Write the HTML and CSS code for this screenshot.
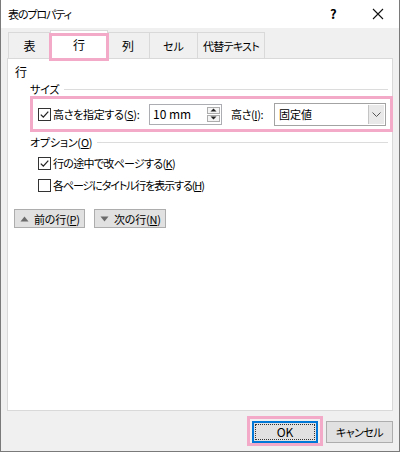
FILE: index.html
```html
<!DOCTYPE html>
<html lang="ja">
<head>
<meta charset="utf-8">
<title>表のプロパティ</title>
<link rel="stylesheet" href="styles.css">
</head>
<body>
<div class="window">
  <div class="titlebar">
    <span class="title">表のプロパティ</span>
    <span class="help">?</span>
    <span class="close"><svg width="12" height="12" viewBox="0 0 12 12"><path d="M1 1 L11 11 M11 1 L1 11" stroke="#111" stroke-width="1.1" fill="none"/></svg></span>
  </div>
  <div class="body">
    <div class="tabs">
      <div class="tab t1">表</div>
      <div class="tab t2 active">行</div>
      <div class="tab t3">列</div>
      <div class="tab t4">セル</div>
      <div class="tab t5">代替テキスト</div>
    </div>
    <div class="panel">
      <div class="section-title">行</div>
      <div class="group">
        <div class="group-head"><span class="head-text">サイズ</span><span class="rule"></span></div>
        <div class="size-row">
          <span class="checkbox checked"><svg width="11" height="11" viewBox="0 0 11 11"><path d="M1.8 5.6 L4.3 8.1 L9.3 2.6" stroke="#222" stroke-width="1.3" fill="none"/></svg></span>
          <span class="size-label">高さを指定する(<u>S</u>):</span>
          <span class="spin-input">
            <span class="value">10 mm</span>
            <span class="spinner">
              <span class="spin-btn"><svg width="7" height="4" viewBox="0 0 7 4"><path d="M0.5 3.5 L3.5 0.5 L6.5 3.5 Z" fill="#222"/></svg></span>
              <span class="spin-btn"><svg width="7" height="4" viewBox="0 0 7 4"><path d="M0.5 0.5 L3.5 3.5 L6.5 0.5 Z" fill="#222"/></svg></span>
            </span>
          </span>
          <span class="height-label">高さ(<u>I</u>):</span>
          <span class="select">
            <span class="select-value">固定値</span>
            <span class="select-btn"><svg width="9" height="5" viewBox="0 0 9 5"><path d="M0.5 0.5 L4.5 4.5 L8.5 0.5" stroke="#555" stroke-width="1" fill="none"/></svg></span>
          </span>
        </div>
      </div>
      <div class="group">
        <div class="group-head option-head"><span class="head-text">オプション(<u>O</u>)</span><span class="rule"></span></div>
        <div class="check-row">
          <span class="checkbox checked"><svg width="11" height="11" viewBox="0 0 11 11"><path d="M1.8 5.6 L4.3 8.1 L9.3 2.6" stroke="#222" stroke-width="1.3" fill="none"/></svg></span>
          <span class="check-text">行の途中で改ページする(<u>K</u>)</span>
        </div>
        <div class="check-row">
          <span class="checkbox"></span>
          <span class="check-text narrow">各ページにタイトル行を表示する(<u>H</u>)</span>
        </div>
      </div>
      <div class="nav-buttons">
        <span class="nav-btn prev"><svg width="9" height="6" viewBox="0 0 9 6"><path d="M0.5 5.5 L4.5 0.5 L8.5 5.5 Z" fill="#6b6b6b"/></svg><span class="nav-text">前の行(<u>P</u>)</span></span>
        <span class="nav-btn next"><svg width="9" height="6" viewBox="0 0 9 6"><path d="M0.5 0.5 L4.5 5.5 L8.5 0.5 Z" fill="#6b6b6b"/></svg><span class="nav-text">次の行(<u>N</u>)</span></span>
      </div>
    </div>
    <div class="footer">
      <span class="btn ok">OK</span>
      <span class="btn cancel">キャンセル</span>
    </div>
  </div>
</div>
</body>
</html>
```

FILE: styles.css
```css
* { box-sizing: border-box; }
html, body { margin: 0; padding: 0; }
body {
  width: 400px;
  height: 452px;
  background: #ffffff;
  font-family: "Noto Sans CJK JP", "Noto Sans", sans-serif;
  font-size: 11px;
  font-feature-settings: "palt";
  color: #000;
  overflow: hidden;
}
u { text-decoration: underline; text-underline-offset: 1px; }

.window {
  width: 400px;
  height: 452px;
  border-left: 1px solid #7a7a7a;
  border-right: 1px solid #7a7a7a;
  border-bottom: 1px solid #7a7a7a;
  background: #f0f0f0;
  display: flex;
  flex-direction: column;
}

.titlebar {
  height: 28px;
  background: #ffffff;
  display: flex;
  align-items: center;
  padding-left: 7px;
  flex: none;
}
.title { flex: 1; line-height: 16px; letter-spacing: -1.1px; white-space: nowrap; }
.help { width: 12px; font-size: 13px; line-height: 16px; margin-right: 30px; font-weight: 700; }
.close { width: 12px; height: 12px; margin-right: 15px; display: flex; }

.body {
  flex: 1;
  padding: 2px 6px 0 6px;
  display: flex;
  flex-direction: column;
}

.tabs {
  height: 29px;
  margin-bottom: -1px;
  display: flex;
  align-items: flex-end;
  padding-left: 1px;
  position: relative;
  z-index: 1;
}
.tab {
  height: 27px;
  border: 1px solid #d9d9d9;
  background: #f0f0f0;
  display: flex;
  align-items: center;
  justify-content: center;
  line-height: 16px;
  padding-top: 1px;
  margin-left: -1px;
  font-size: 12px;
  white-space: nowrap;
}
.t1 { width: 43px; margin-left: 0; }
.t2 { width: 58px; }
.t3 { width: 44px; }
.t4 { width: 49px; font-size: 11px; }
.t5 { width: 68px; font-size: 11px; letter-spacing: -0.7px; }
.tab.active {
  height: 29px;
  background: #ffffff;
  border-bottom-color: #ffffff;
  position: relative;
  padding-top: 0;
  margin-left: -1px;
  margin-right: -1px;
  z-index: 2;
}
.tab.active::after {
  content: "";
  position: absolute;
  left: -2px;
  right: -2px;
  top: 2px;
  bottom: -3px;
  border: 3px solid #f3a9c8;
}

.panel {
  height: 353px;
  background: #ffffff;
  border: 1px solid #d9d9d9;
  padding: 5px 0 0 0;
  flex: none;
}
.section-title {
  line-height: 16px;
  height: 16px;
  padding-left: 7px;
  font-size: 12px;
}
.group { padding-left: 22px; }
.group-head {
  display: flex;
  align-items: center;
  height: 14px;
  line-height: 14px;
  margin-top: 2px;
  padding-right: 4px;
  white-space: nowrap;
}
.option-head { margin-top: 3px; }
.head-text { letter-spacing: -0.2px; }
.rule {
  flex: 1;
  height: 1px;
  background: #dcdcdc;
  margin-left: 5px;
  margin-top: 1px;
}

.size-row {
  height: 36px;
  margin-right: -1px;
  border: 3px solid #f3a9c8;
  display: flex;
  align-items: center;
  padding-left: 5px;
  white-space: nowrap;
}
.checkbox {
  width: 13px;
  height: 13px;
  border: 1px solid #333;
  background: #fff;
  display: flex;
  align-items: center;
  justify-content: center;
  flex: none;
}
.size-label {
  width: 98px;
  padding-left: 2px;
  line-height: 16px;
  letter-spacing: -0.3px;
}
.spin-input {
  width: 73px;
  height: 21px;
  border: 1px solid #abadb3;
  display: flex;
  align-items: center;
  padding-left: 3px;
  padding-right: 1px;
  font-size: 12px;
}
.value { flex: 1; line-height: 16px; }
.spinner {
  width: 13px;
  height: 15px;
  display: flex;
  flex-direction: column;
  gap: 1px;
}
.spin-btn {
  flex: 1;
  border: 1px solid #adadad;
  background: #f4f4f4;
  display: flex;
  align-items: center;
  justify-content: center;
}
.height-label {
  width: 43px;
  margin-left: 9px;
  line-height: 16px;
  letter-spacing: -0.4px;
}
.select {
  width: 112px;
  height: 23px;
  border: 1px solid #a3a3a3;
  display: flex;
  align-items: stretch;
  background: #fff;
}
.select-value { flex: 1; line-height: 21px; padding-left: 4px; }
.select-btn {
  width: 16px;
  border-left: 1px solid #c4c4c4;
  background: #e9e9e9;
  display: flex;
  align-items: center;
  justify-content: center;
  margin: 1px;
}

.check-row {
  height: 22px;
  display: flex;
  align-items: center;
  padding-left: 8px;
  white-space: nowrap;
}
.group-head + .check-row { margin-top: 3px; }
.check-text { padding-left: 2px; line-height: 16px; letter-spacing: -0.7px; }
.check-text.narrow { letter-spacing: -1.1px; }

.nav-buttons {
  display: flex;
  gap: 9px;
  margin-top: 13px;
  padding-left: 6px;
}
.nav-btn {
  height: 19px;
  background: #e1e1e1;
  border: 1px solid #adadad;
  display: flex;
  align-items: center;
  gap: 5px;
  padding-left: 5px;
  white-space: nowrap;
}
.nav-text { line-height: 16px; letter-spacing: -0.2px; }
.prev { width: 71px; }
.next { width: 72px; }

.footer {
  display: flex;
  justify-content: flex-end;
  gap: 8px;
  padding-top: 10px;
}
.btn {
  height: 22px;
  background: #e1e1e1;
  border: 1px solid #adadad;
  display: flex;
  align-items: center;
  justify-content: center;
  line-height: 16px;
  position: relative;
  white-space: nowrap;
}
.ok {
  width: 66px;
  border: 2px solid #0078d7;
  font-size: 12px;
}
.ok::before {
  content: "";
  position: absolute;
  inset: 1px;
  border: 1px dotted #333;
}
.ok::after {
  content: "";
  position: absolute;
  left: -7px;
  right: -7px;
  top: -7px;
  bottom: -5px;
  border: 3px solid #f3a9c8;
}
.cancel { width: 67px; letter-spacing: -0.5px; }
```
